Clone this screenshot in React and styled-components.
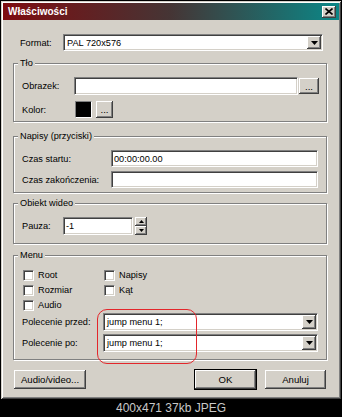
import React from "react";
import styled, { createGlobalStyle } from "styled-components";

const Global = createGlobalStyle`
  html, body {
    margin: 0;
    padding: 0;
    background: #000;
  }
  body {
    font-family: "Liberation Sans", Arial, sans-serif;
    font-size: 9.2px;
    color: #000;
  }
  * {
    box-sizing: border-box;
  }
`;

const FACE = "#d4d0c8";

const Frame = styled.div`
  width: 342px;
  height: 417px;
  background: #000;
  padding: 1px 1px 0 1px;
  display: flex;
  flex-direction: column;
`;

const Win = styled.div`
  height: 398px;
  background: ${FACE};
  padding: 2px;
  box-shadow: inset 1px 1px 0 ${FACE}, inset -1px -1px 0 #404040,
    inset 2px 2px 0 #fff, inset -2px -2px 0 #808080;
  display: flex;
  flex-direction: column;
`;

const TitleBar = styled.div`
  height: 17px;
  display: flex;
  align-items: center;
  justify-content: space-between;
  padding: 0 3px 0 5px;
  background: linear-gradient(90deg, #7e0c10 0%, #453535 50%, #0b8787 100%);
`;

const Title = styled.span`
  color: #fff;
  font-weight: bold;
  font-size: 10px;
`;

const CloseBtn = styled.div`
  width: 14px;
  height: 12px;
  background: ${FACE};
  box-shadow: inset -1px -1px 0 #404040, inset 1px 1px 0 #fff,
    inset -2px -2px 0 #808080;
  display: flex;
  align-items: center;
  justify-content: center;
`;

const Content = styled.div`
  padding: 14px 12px 0 10px;
  display: flex;
  flex-direction: column;
`;

const Row = styled.div`
  display: flex;
  align-items: center;
  height: ${(p) => p.$h || 18}px;
  margin-top: ${(p) => p.$mt || 0}px;
`;

const Label = styled.span`
  flex: none;
  width: ${(p) => p.$w}px;
  padding-left: ${(p) => (p.$pl === undefined ? 1 : p.$pl)}px;
  white-space: nowrap;
`;

const Sunken = styled.div`
  flex: none;
  width: ${(p) => p.$w}px;
  height: 100%;
  background: #fff;
  border: 1px solid;
  border-color: #808080 #fff #fff #808080;
  box-shadow: inset 1px 1px 0 #404040, inset -1px -1px 0 ${FACE};
  display: flex;
  align-items: center;
  padding: 0 1px 0 2px;
  white-space: nowrap;
  overflow: hidden;
`;

const SelectText = styled.span`
  flex: 1;
  padding-left: 1px;
`;

const DropBtn = styled.div`
  flex: none;
  width: 14px;
  height: calc(100% - 2px);
  background: ${FACE};
  box-shadow: inset -1px -1px 0 #404040, inset 1px 1px 0 #fff,
    inset -2px -2px 0 #808080;
  display: flex;
  align-items: center;
  justify-content: center;
`;

const Button = styled.div`
  flex: none;
  width: ${(p) => p.$w}px;
  height: ${(p) => p.$h || 21}px;
  margin-left: ${(p) => p.$ml || 0}px;
  background: ${FACE};
  border: 1px solid ${(p) => (p.$default ? "#000" : FACE)};
  box-shadow: inset -1px -1px 0 #404040, inset 1px 1px 0 #fff,
    inset -2px -2px 0 #808080;
  display: flex;
  align-items: center;
  justify-content: center;
  font-size: 9.6px;
`;

const Swatch = styled.div`
  flex: none;
  width: 17px;
  height: 17px;
  background: #000;
  border: 1px solid;
  border-color: #808080 #fff #fff #808080;
`;

const Group = styled.fieldset`
  position: relative;
  margin: ${(p) => p.$mt}px 0 0 0;
  min-width: 0;
  padding: ${(p) => p.$pt || 7}px 6px ${(p) => p.$pb}px 7px;
  border: 1px solid #808080;
  box-shadow: inset 1px 1px 0 #fff, 1px 1px 0 #fff;
  display: flex;
  flex-direction: column;
`;

const Legend = styled.legend`
  font-size: 9.2px;
  line-height: 13px;
  padding: 0 2px;
  margin-left: -3px;
  background: ${FACE};
`;

const Checks = styled.div`
  display: grid;
  grid-template-columns: 81px auto;
  grid-auto-rows: 14px;
  row-gap: 1px;
  padding-left: 2px;
`;

const CheckItem = styled.div`
  display: flex;
  align-items: center;
  gap: 4px;
`;

const Box = styled.div`
  width: 11px;
  height: 11px;
  background: #fff;
  border: 1px solid;
  border-color: #808080 #fff #fff #808080;
  box-shadow: inset 1px 1px 0 #404040, inset -1px -1px 0 ${FACE};
`;

const Spinner = styled.div`
  flex: none;
  margin-left: 2px;
  display: flex;
  flex-direction: column;
  width: 12px;
  height: 100%;
`;

const SpinPart = styled.div`
  flex: 1;
  background: ${FACE};
  box-shadow: inset -1px -1px 0 #404040, inset 1px 1px 0 #fff,
    inset -2px -2px 0 #808080;
  display: flex;
  align-items: center;
  justify-content: center;
`;

const Highlight = styled.div`
  position: absolute;
  left: 83px;
  top: 47px;
  width: 100px;
  height: 55px;
  border: 1px solid #e3262b;
  border-radius: 10px;
  pointer-events: none;
`;

const Buttons = styled.div`
  display: flex;
  align-items: center;
  margin-top: 9px;
`;

const Spacer = styled.div`
  flex: 1;
`;

const Caption = styled.div`
  flex: 1;
  display: flex;
  align-items: center;
  justify-content: center;
  color: #c8c8c8;
  font-size: 12px;
`;

const Arrow = ({ up }) => (
  <svg width="7" height="4" viewBox="0 0 7 4">
    <path d={up ? "M3.5 0 L7 4 L0 4 Z" : "M0 0 L7 0 L3.5 4 Z"} fill="#000" />
  </svg>
);

const TinyArrow = ({ up }) => (
  <svg width="5" height="3" viewBox="0 0 5 3">
    <path d={up ? "M2.5 0 L5 3 L0 3 Z" : "M0 0 L5 0 L2.5 3 Z"} fill="#000" />
  </svg>
);

const Select = ({ w, text }) => (
  <Sunken $w={w}>
    <SelectText>{text}</SelectText>
    <DropBtn>
      <Arrow />
    </DropBtn>
  </Sunken>
);

const Check = ({ label }) => (
  <CheckItem>
    <Box />
    <span>{label}</span>
  </CheckItem>
);

export default function App() {
  return (
    <Frame>
      <Global />
      <Win>
        <TitleBar>
          <Title>Właściwości</Title>
          <CloseBtn>
            <svg width="8" height="7" viewBox="0 0 8 7">
              <path d="M0.5 0.5 L7.5 6.5 M7.5 0.5 L0.5 6.5" stroke="#000" strokeWidth="1.6" />
            </svg>
          </CloseBtn>
        </TitleBar>
        <Content>
          <Row $h={17}>
            <Label $w={50} $pl={7}>Format:</Label>
            <Select w={260} text="PAL 720x576" />
          </Row>

          <Group $mt={6} $pb={2}>
            <Legend>Tło</Legend>
            <Row>
              <Label $w={53}>Obrazek:</Label>
              <Sunken $w={224} />
              <Button $w={22} $h={18}>...</Button>
            </Row>
            <Row $h={19} $mt={5}>
              <Label $w={54}>Kolor:</Label>
              <Swatch />
              <Button $w={19} $h={19} $ml={3}>...</Button>
            </Row>
          </Group>

          <Group $mt={8} $pb={4}>
            <Legend>Napisy (przyciski)</Legend>
            <Row $h={17}>
              <Label $w={90}>Czas startu:</Label>
              <Sunken $w={207}>00:00:00.00</Sunken>
            </Row>
            <Row $h={17} $mt={4}>
              <Label $w={90}>Czas zakończenia:</Label>
              <Sunken $w={207} />
            </Row>
          </Group>

          <Group $mt={4} $pb={8}>
            <Legend>Obiekt wideo</Legend>
            <Row>
              <Label $w={42}>Pauza:</Label>
              <Sunken $w={70}>-1</Sunken>
              <Spinner>
                <SpinPart>
                  <TinyArrow up />
                </SpinPart>
                <SpinPart>
                  <TinyArrow />
                </SpinPart>
              </Spinner>
            </Row>
          </Group>

          <Group $mt={5} $pt={6} $pb={7}>
            <Legend>Menu</Legend>
            <Checks>
              <Check label="Root" />
              <Check label="Napisy" />
              <Check label="Rozmiar" />
              <Check label="Kąt" />
              <Check label="Audio" />
            </Checks>
            <Row $mt={1}>
              <Label $w={82}>Polecenie przed:</Label>
              <Select w={215} text="jump menu 1;" />
            </Row>
            <Row $mt={3}>
              <Label $w={82}>Polecenie po:</Label>
              <Select w={215} text="jump menu 1;" />
            </Row>
            <Highlight />
          </Group>

          <Buttons>
            <Button $w={74}>Audio/video...</Button>
            <Spacer />
            <Button $w={63} $default>OK</Button>
            <Button $w={63} $ml={7}>Anuluj</Button>
          </Buttons>
        </Content>
      </Win>
      <Caption>400x471 37kb JPEG</Caption>
    </Frame>
  );
}
